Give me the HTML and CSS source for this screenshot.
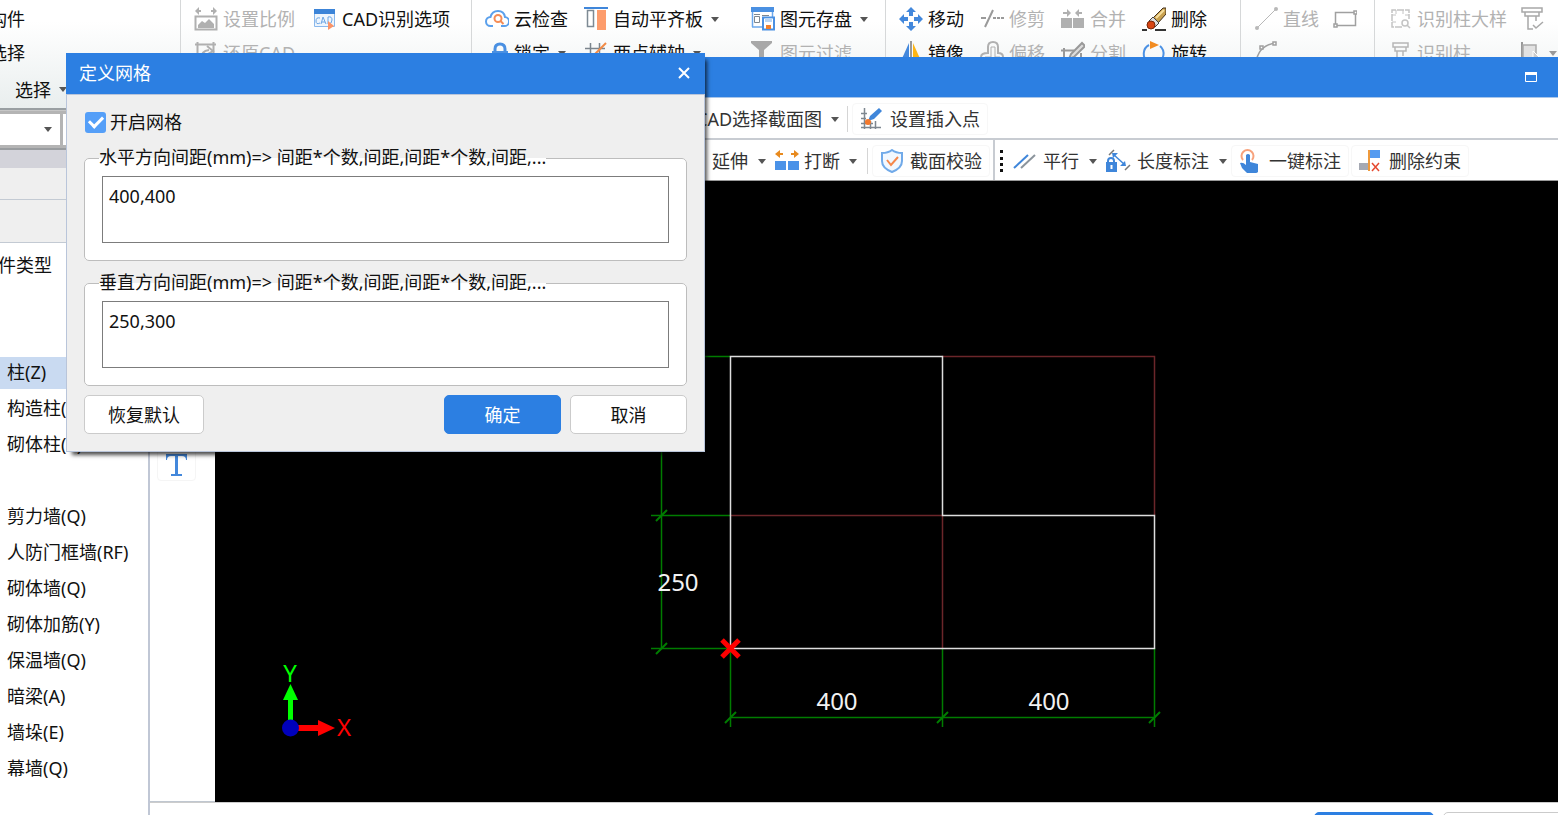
FILE: index.html
```html
<!DOCTYPE html>
<html lang="zh-CN">
<head>
<meta charset="utf-8">
<title>定义网格</title>
<link rel="stylesheet" href="styles.css">
</head>
<body>
<div class="app">
  <header class="ribbon">
    <div class="group group-select">
      <button class="tool">构件</button>
      <button class="tool">选择</button>
      <button class="tool tool-select">选择<span class="caret"></span></button>
    </div>
    <div class="group group-cad">
      <button class="tool" disabled>
        <svg class="icon" viewBox="0 0 24 24" fill="none" stroke="#b0b0b0"><path d="M2 4h5M17 4h5" stroke-width="2"/><path d="M1 4l4-4v8zM23 4l-4-4v8z" fill="#b0b0b0" stroke="none"/><rect x="1.500" y="9.500" width="21" height="13" stroke-width="2"/><path d="M4 21v-3l4-4 3 2 4-4 5 5v4z" fill="#b0b0b0" stroke="none"/></svg>
        设置比例</button>
      <button class="tool">
        <svg class="icon" viewBox="0 0 24 24"><path d="M1 2h21v6H1z" fill="#3c84d8"/><path d="M1.500 7v12.500h20V7" fill="#eef5fd" stroke="#8ab8ec"/><path d="M7 11q-4-1-4 3t4 2M8 17l2-7 3 7M9 15h3M15 10v7q4 0 4-4t-4-3" fill="none" stroke="#6ba5e4"/><path d="M15 14l6 5-6 4z" fill="#fb9468"/></svg>
        CAD识别选项</button>
      <button class="tool" disabled>
        <svg class="icon" viewBox="0 0 24 24" fill="none" stroke="#b0b0b0"><path d="M1 3.500h21M3.500 1v21M19.500 1v21M1 21h21" stroke-width="2"/><path d="M7 18q0-8 8-9M13 5l6 5-7 4" stroke-width="2"/></svg>
        还原CAD</button>
    </div>
    <div class="group group-check">
      <button class="tool">
        <svg class="icon" viewBox="0 0 24 24" fill="none"><path d="M8 19H5.500a4.500 4.500 0 0 1 0-9Q7 4 13 4t7 6a4.500 4.500 0 0 1-1 9h-3" stroke="#5ba0ec" stroke-width="2"/><circle cx="13" cy="11.500" r="3.500" stroke="#f58d57" stroke-width="2"/><path d="M15.500 14l3 3" stroke="#f58d57" stroke-width="2"/></svg>
        云检查</button>
      <button class="tool">
        <svg class="icon" viewBox="0 0 24 24"><path d="M0 1h24" stroke="#3f86da" stroke-width="2"/><rect x="3.500" y="3.500" width="6" height="16" fill="#fff" stroke="#7e8a94" stroke-width="1.500"/><path d="M13 3h9v20h-9z" fill="#fd9c6c"/></svg>
        自动平齐板<span class="caret"></span></button>
      <button class="tool">
        <svg class="icon" viewBox="0 0 24 24" fill="none"><path d="M1.500 20V1.500h20V10M1 20h10" stroke="#6ba8ec" stroke-width="1.500"/><path d="M0 0h23v5H0z" fill="#4a90e2"/><path d="M3.500 9.500h5v6h-5zM3 7.500h6M11 8.500h7" stroke="#7d8790"/><path d="M12 10.500h11v12H12z" fill="#fff" stroke="#4a90e2" stroke-width="2"/><path d="M14 11h7v4h-7z" fill="#b9d6f6"/><path d="M15 18h5v4h-5z" fill="#f07f2e"/></svg>
        图元存盘<span class="caret"></span></button>
      <button class="tool">
        <svg class="icon" viewBox="0 0 24 24"><path d="M10 12V8q0-5 5-5t5 5v4" fill="none" stroke="#4a90e2" stroke-width="3"/><rect x="7" y="10" width="16" height="13" fill="#4a90e2"/></svg>
        锁定<span class="caret"></span></button>
      <button class="tool">
        <svg class="icon" viewBox="0 0 24 24" fill="none"><path d="M1 7.500h20M6.500 2v20M15.500 2v20M1 17.500h21" stroke="#7b858d" stroke-width="1.500"/><path d="M6 18L22 2" stroke="#f28a45" stroke-width="2"/></svg>
        两点辅轴<span class="caret"></span></button>
      <button class="tool" disabled>
        <svg class="icon" viewBox="0 0 24 24"><path d="M0 0h21v2l-8 7v13H8V9L0 2z" fill="#a8a8a8"/></svg>
        图元过滤</button>
    </div>
    <div class="group group-modify">
      <button class="tool">
        <svg class="icon" viewBox="0 0 24 24"><path d="M12 0l5 5h-3v4h-4V5H7zM12 24l-5-5h3v-4h4v4h3zM0 12l5-5v3h4v4H5v3zM24 12l-5 5v-3h-4v-4h4V7z" fill="#4388dc"/></svg>
        移动</button>
      <button class="tool" disabled>
        <svg class="icon" viewBox="0 0 24 24" fill="none" stroke="#9a9a9a" stroke-width="2"><path d="M1 11h5M5 20L13 3"/><path d="M13 11h11" stroke-dasharray="3 1"/></svg>
        修剪</button>
      <button class="tool" disabled>
        <svg class="icon" viewBox="0 0 24 24" fill="#b0b0b0"><path d="M0 11h11v10H0zM12 11h11v10H12zM2 5h4V2l4 4-4 4V7H2zM21 5h-3V2l-4 4 4 4V7h3z"/></svg>
        合并</button>
      <button class="tool">
        <svg class="icon" viewBox="0 0 24 24"><path d="M0 23h5M13 23h11" stroke="#333" stroke-width="2"/><path d="M11 11L21 1h3v6l-8 9z" fill="#c8a04e" stroke="#43301c"/><path d="M14 11l8-8" stroke="#f6df9e" stroke-width="2"/><path d="M7 14l4-4 6 6-4 4z" fill="#ddd" stroke="#444"/><circle cx="9" cy="18" r="4" fill="#d74412" stroke="#762708"/></svg>
        删除</button>
      <button class="tool">
        <svg class="icon" viewBox="0 0 24 24"><path d="M10 2v20H1z" fill="#4388dc"/><path d="M12 0v24" stroke="#999" stroke-width="2"/><path d="M14 2v20h9z" fill="#fdb515"/></svg>
        镜像</button>
      <button class="tool" disabled>
        <svg class="icon" viewBox="0 0 24 24" fill="none" stroke="#b0b0b0" stroke-width="2"><path d="M1 22v-6q0-4 7-4V6q0-5 5-5t5 5v6q5 0 5 4v6z"/><path d="M5 20v-4h6V6h4v10h5v4" stroke-width="1"/></svg>
        偏移</button>
      <button class="tool" disabled>
        <svg class="icon" viewBox="0 0 24 24" fill="none" stroke="#999"><path d="M0 9.500h13M3 7v15M0 20.500h22M20 12v10" stroke-width="2"/><path d="M8 18l2-5L21 2l3 3-11 11z" fill="#ddd" stroke-width="2"/></svg>
        分割</button>
      <button class="tool">
        <svg class="icon" viewBox="0 0 24 24" fill="none"><path d="M7 4a10 10 0 0 0-1 17M18 5a10 10 0 0 1-3 17" stroke="#4b91e4" stroke-width="2"/><path d="M8 0l9 4-9 4z" fill="#f28b20"/></svg>
        旋转</button>
    </div>
    <div class="group group-draw">
      <button class="tool" disabled>
        <svg class="icon" viewBox="0 0 24 24"><path d="M3 21L22 2" stroke="#b8b8b8"/><circle cx="3" cy="21" r="2" fill="#b8b8b8"/><circle cx="22" cy="2" r="2" fill="#b8b8b8"/></svg>
        直线</button>
      <button class="tool" disabled aria-label="矩形">
        <svg class="icon" viewBox="0 0 24 24" fill="#fff" stroke="#a0a0a0" stroke-width="1.500"><path d="M2.500 5.500h20v13h-20z"/><path d="M1 17h3v3H1zM21 4h3v3h-3z"/></svg></button>
      <button class="tool" disabled aria-label="圆弧">
        <svg class="icon" viewBox="0 0 24 24" fill="none" stroke="#a0a0a0" stroke-width="1.500"><path d="M2 22Q4 4 22 2"/><path d="M6 5h3v3H6zM19 1h3v3h-3z" fill="#fff"/></svg></button>
    </div>
    <div class="group group-identify">
      <button class="tool" disabled>
        <svg class="icon" viewBox="0 0 24 24" fill="none" stroke="#c4c4c4" stroke-width="1.500"><path d="M14 20H4V3h17v9" stroke-dasharray="7 1"/><path d="M8 3v4M15 3v4M4 8h4M4 15h4M17 8h4" stroke-width="1"/><circle cx="17" cy="16" r="3"/><path d="M19 18l3 3"/></svg>
        识别柱大样</button>
      <button class="tool" disabled aria-label="校核柱">
        <svg class="icon" viewBox="0 0 24 24" fill="none" stroke="#a8a8a8" stroke-width="1.500"><path d="M2 1h20v4H2zM5 5v4h14V5M8 9v13h5M16 9v5M13 18l3 3 7-6"/></svg></button>
      <button class="tool" disabled>
        <svg class="icon" viewBox="0 0 24 24" fill="none" stroke="#b6b6b6" stroke-width="1.500"><path d="M5 2h15v4H5zM7 6v4h11V6M9 10v12h6M15 10v5"/></svg>
        识别柱</button>
      <button class="tool" disabled aria-label="拾取">
        <svg class="icon" viewBox="0 0 24 24"><path d="M2 1v23" stroke="#999" stroke-width="2"/><path d="M3 4h13v14H3z" fill="#e2e2e2" stroke="#aaa" stroke-width="1.500"/><path d="M13 10l9 9-5 1-4 4z" fill="#ccc" stroke="#fff"/></svg>
        <span class="caret"></span></button>
    </div>
  </header>

  <aside class="dock">
    <div class="combos">
      <button class="combo" aria-label="楼层"><span class="caret"></span></button>
      <button class="combo" aria-label="构件类别"></button>
    </div>
    <div class="dock-band"></div>
    <div class="dock-bar"></div>
    <div class="dock-bar dock-bar-tall"></div>
    <h2 class="dock-title">件类型</h2>
    <ul class="types">
      <li class="type"><a class="type-link type-active" href="#">柱(Z)</a></li>
      <li class="type"><a class="type-link" href="#">构造柱(Z)</a></li>
      <li class="type"><a class="type-link" href="#">砌体柱(Z)</a></li>
      <li class="type"></li>
      <li class="type"><a class="type-link" href="#">剪力墙(Q)</a></li>
      <li class="type"><a class="type-link" href="#">人防门框墙(RF)</a></li>
      <li class="type"><a class="type-link" href="#">砌体墙(Q)</a></li>
      <li class="type"><a class="type-link" href="#">砌体加筋(Y)</a></li>
      <li class="type"><a class="type-link" href="#">保温墙(Q)</a></li>
      <li class="type"><a class="type-link" href="#">暗梁(A)</a></li>
      <li class="type"><a class="type-link" href="#">墙垛(E)</a></li>
      <li class="type"><a class="type-link" href="#">幕墙(Q)</a></li>
    </ul>
  </aside>
</div>

<section class="editor">
  <div class="editor-title">
    <button class="maximize" aria-label="最大化"><svg class="glyph" viewBox="0 0 14 14"><path d="M1.500 2.500h11v9h-11z" fill="none" stroke="#fff"/><path d="M1 2h12v3H1z" fill="#fff"/></svg></button>
  </div>
  <div class="bar bar-source">
    <button class="bar-tool">CAD选择截面图<span class="caret"></span></button>
    <span class="rule"></span>
    <button class="bar-tool framed">
      <svg class="icon" viewBox="0 0 24 24" fill="none"><path d="M4.500 1v21M1 16.500h12M1 6.500h6M1 11.500h5M10.500 14v8M15.500 14v8M1 20.500h20" stroke="#7e8790" stroke-width="1.500"/><path d="M8 14l2-5 9-8 3 3-8 8z" fill="#3f86da"/><circle cx="8" cy="15" r="3" fill="#f4792c"/></svg>
      设置插入点</button>
  </div>
  <div class="bar bar-edit">
    <button class="bar-tool">延伸<span class="caret"></span></button>
    <button class="bar-tool tool-break">
      <svg class="icon" viewBox="0 0 24 24"><path d="M0 12h11v9H0zM13 12h11v9H13z" fill="#4a92e8"/><path d="M0 5l5-4v3h3v2H5v3zM24 5l-5-4v3h-3v2h3v3z" fill="#e88a1e"/></svg>
      打断<span class="caret"></span></button>
    <span class="rule rule-check"></span>
    <button class="bar-tool framed">
      <svg class="icon" viewBox="0 0 24 24" fill="none"><path d="M12 1q4 3 10 3v8q0 7-10 11Q2 19 2 12V4q6 0 10-3z" fill="#f2f8ff" stroke="#71aae9" stroke-width="2"/><path d="M7 11l4 5 7-8" stroke="#f5874b" stroke-width="2"/></svg>
      截面校验</button>
    <span class="divider"></span>
    <span class="grip"></span>
    <button class="bar-tool">
      <svg class="icon" viewBox="0 0 24 24" fill="none" stroke-width="2"><path d="M1 19L15 6" stroke="#3f86da"/><path d="M8 19L22 6" stroke="#8b949c"/></svg>
      平行<span class="caret"></span></button>
    <button class="bar-tool tool-length">
      <svg class="icon icon-wide" viewBox="0 0 26 24" fill="none"><path d="M4 6l5-5M20 21l5-5" stroke="#777" stroke-width="1.500"/><path d="M9 6l10 9" stroke="#3f86da" stroke-width="1.500"/><path d="M7 4h6l-5 5zM21 17h-6l5-5z" fill="#3f86da"/><path d="M3 14v-2q0-3 3-3t3 3v2" stroke="#3f86da" stroke-width="2"/><path d="M1 13h11v10H1z" fill="#3f86da"/><path d="M6.500 16v4" stroke="#fff" stroke-width="2"/></svg>
      长度标注<span class="caret"></span></button>
    <button class="bar-tool framed">
      <svg class="icon" viewBox="0 0 24 24" fill="none"><path d="M4 11a6 6 0 1 1 9 0" stroke="#f7a27c" stroke-width="2"/><path d="M7 6q2-2 4 0v7l8 2v8q-1 1-2 1H8l-5-5-2-5q3-1 6 2z" fill="#3f86da"/></svg>
      一键标注</button>
    <button class="bar-tool framed">
      <svg class="icon" viewBox="0 0 24 24" fill="none"><path d="M0 14h10v7H0z" fill="#a5a9b3"/><path d="M10 1h11v8H10z" fill="#559bf0"/><path d="M10 1v21" stroke="#ef9a3c" stroke-width="2"/><path d="M13 14l7 8M20 14l-7 8" stroke="#e5492f" stroke-width="1.500"/></svg>
      删除约束</button>
  </div>
  <div class="workspace">
    <div class="side-tools">
      <button class="text-tool" aria-label="文字"><svg class="icon" viewBox="0 0 24 24"><path d="M1 1h21v6h-1q0-4-4-4h-4v18h4v2H6v-2h4V3H6Q2 3 2 7H1z" fill="#4388dc"/></svg></button>
    </div>
    <div class="canvas">
      <svg class="drawing" role="img" aria-label="截面网格">
        <g class="dim-lines">
          <path d="M446.500 175V467M436 334.500H515M436 467.500H515M446 175.500H515"/>
          <path d="M515.500 467V546M727.500 467V546M939.500 467V546M515 536.500H939"/>
          <path class="tick" d="M441 340l11-11M441 473l11-11M510 542l11-11M722 542l11-11M934 542l11-11"/>
        </g>
        <path class="grid-line" d="M727 175.500H939.500V334M515 334.500H727.500V467"/>
        <path class="outline" d="M515.500 175.500H727.500V334.500H939.500V467.500H515.500z"/>
        <path class="origin-mark" d="M507 459l17 17M524 459l-17 17"/>
        <text class="dim-text" x="463" y="410">250</text>
        <text class="dim-text" x="622" y="529">400</text>
        <text class="dim-text" x="834" y="529">400</text>
        <path d="M73 545v-26h-5l7.500-16 7.500 16h-5v26z" fill="#0f0"/>
        <path d="M78 544h25v-5l17 8-17 8v-5H78z" fill="#f00"/>
        <circle cx="75.500" cy="547" r="8.500" fill="#00b"/>
        <text class="axis-text" x="75" y="501" fill="#0f0">Y</text>
        <text class="axis-text" x="129" y="555" fill="#f00">X</text>
      </svg>
    </div>
  </div>
  <footer class="editor-footer">
    <button class="btn btn-primary" aria-label="确定"></button>
    <button class="btn btn-last" aria-label="取消"></button>
  </footer>
</section>

<form class="dialog" role="dialog" aria-labelledby="dialog-title">
  <div class="dialog-title">
    <h1 class="dialog-heading" id="dialog-title">定义网格</h1>
    <button class="close" type="button" aria-label="关闭"><svg class="glyph" viewBox="0 0 14 14"><path d="M2 2l10 10M12 2L2 12" stroke="#fff" stroke-width="2"/></svg></button>
  </div>
  <div class="dialog-body">
    <label class="enable"><input class="tickbox" type="checkbox" checked>开启网格</label>
    <fieldset class="spacing">
      <legend class="spacing-label" id="h-label">水平方向间距(mm)=&gt; 间距*个数,间距,间距*个数,间距,...</legend>
      <textarea class="spacing-input" aria-labelledby="h-label">400,400</textarea>
    </fieldset>
    <fieldset class="spacing">
      <legend class="spacing-label" id="v-label">垂直方向间距(mm)=&gt; 间距*个数,间距,间距*个数,间距,...</legend>
      <textarea class="spacing-input" aria-labelledby="v-label">250,300</textarea>
    </fieldset>
    <div class="actions">
      <button class="btn btn-reset" type="button">恢复默认</button>
      <button class="btn btn-primary" type="button">确定</button>
      <button class="btn" type="button">取消</button>
    </div>
  </div>
</form>
</body>
</html>
```
FILE: styles.css
```css
* { box-sizing: border-box; }

body {
  margin: 0;
  height: 100vh;
  overflow: hidden;
  background: #fff;
  color: #111;
  font: 18px/24px "Noto Sans", "Noto Sans CJK SC", sans-serif;
}

button, textarea {
  font: inherit;
  color: inherit;
}

button {
  border: 0;
  padding: 0;
  background: none;
  white-space: nowrap;
}

.icon { width: 24px; height: 24px; flex: none; }
.icon-wide { width: 26px; }
.glyph { width: 14px; height: 14px; display: block; }

.caret {
  border: 4px solid transparent;
  border-top: 5px solid #555;
  border-bottom: 0;
  margin-left: 3px;
}

/* main window */
.app {
  display: flex;
  flex-direction: column;
  height: 100%;
}

.ribbon {
  display: flex;
  flex: none;
  height: 110px;
  border-bottom: 2px solid #999fa2;
  background: linear-gradient(#fff 20%, #e9eeee);
}

.group {
  display: grid;
  flex: none;
  grid-auto-rows: 34px;
  align-content: start;
  padding: 2px 0 0 13px;
  border-left: 1px solid #d6d8d9;
}
.group-select { width: 180px; padding-left: 0; border-left: 0; }
.group-select .tool { margin-left: -11px; }
.group-select .tool-select { margin: 5px 0 0 15px; }
.group-cad { width: 291px; grid-template-columns: 119px 1fr; }
.group-check { width: 414px; grid-template-columns: 99px 167px 1fr; }
.group-modify { width: 355px; grid-template-columns: repeat(4, 81px); }
.group-draw { width: 134px; grid-template-columns: 79px 1fr; }
.group-identify { flex: 1; grid-template-columns: 132px 1fr; }

.tool {
  display: flex;
  align-items: center;
  gap: 5px;
}
.tool:disabled { color: #b2b2b2; }
.tool:disabled .caret { border-top-color: #999; margin-left: 0; }

.dock {
  flex: 1;
  width: 150px;
  border-right: 2px solid #c0c7d5;
  background: #fff;
}

.combos {
  display: flex;
  gap: 3px;
  height: 40px;
  padding: 3px 0;
  background: #b4b4b4;
  border-top: 1px solid #c6c6c6;
  border-bottom: 2px solid #999c9f;
}
.combo {
  flex: 1;
  display: flex;
  align-items: center;
  justify-content: flex-end;
  padding-right: 8px;
  background: #fff;
}
.combo:first-child { flex: 0 0 60px; }

.dock-band { height: 18px; background: #d3d3da; }
.dock-bar {
  height: 32px;
  background: #efefef;
  border-bottom: 1px solid #c3cad3;
}
.dock-bar-tall { height: 43px; }

.dock-title {
  margin: 10px 0 0 -2px;
  font-size: 18px;
  font-weight: 400;
}

.types { list-style: none; margin: 78px 0 0; padding: 0; }
.type { height: 36px; padding: 2px 0; }
.type-link {
  display: block;
  padding: 3px 0 5px 7px;
  color: inherit;
  text-decoration: none;
}
.type-active { background: #c9daf1; }

/* section editor window */
.editor {
  position: absolute;
  inset: 57px 0 0 150px;
  display: flex;
  flex-direction: column;
  background: #fff;
  color: #333;
}

.editor-title {
  display: flex;
  align-items: center;
  justify-content: flex-end;
  height: 41px;
  padding-right: 20px;
  background: #2c7fe2;
  border-bottom: 1px solid #a9c6ea;
}

.bar {
  display: flex;
  align-items: center;
  height: 42px;
  padding-top: 2px;
  border-bottom: 2px solid #c8ccd2;
}
.bar-source { padding-left: 546px; }
.bar-edit { height: 41px; padding-left: 562px; border-bottom: 1px solid #999; }
.bar-edit .caret { margin-left: 4px; }

.bar-tool {
  display: flex;
  align-items: center;
  gap: 6px;
  height: 32px;
}
.tool-break { margin-left: 9px; gap: 5px; }
.tool-length { margin: 0 4px 0 8px; }

.framed {
  padding: 0 7px;
  border: 1px solid #f7f7f7;
  border-radius: 4px;
}
.framed + .framed { margin-left: 2px; }

.rule {
  width: 1px;
  height: 26px;
  margin: 0 4px 0 8px;
  background: #d5d5d5;
}
.rule-check { margin-left: 10px; }
.divider {
  align-self: stretch;
  width: 2px;
  margin: -2px 0 0 3px;
  background: #c8ccd2;
}
.grip {
  height: 22px;
  margin: 0 10px 0 5px;
  border-left: 3px dotted #111;
}

.workspace { flex: 1; display: flex; min-height: 0; }
.side-tools {
  width: 65px;
  padding: 267px 0 0 7px;
  border-bottom: 1px solid #c0c7d0;
}
.text-tool {
  display: flex;
  align-items: center;
  justify-content: center;
  width: 39px;
  height: 33px;
  border: 1px solid #f5f5f5;
  border-radius: 4px;
}

.canvas { flex: 1; background: #000; }
.drawing { display: block; width: 100%; height: 100%; }
.dim-lines { fill: none; stroke: #007c00; stroke-width: 1.5; }
.tick { stroke-width: 2; }
.grid-line { fill: none; stroke: #6b262a; stroke-width: 1.5; }
.outline { fill: none; stroke: #ddd; stroke-width: 1.5; }
.origin-mark { fill: none; stroke: #f00; stroke-width: 5; }
.dim-text { fill: #f2f2f2; font-size: 24px; text-anchor: middle; }
.axis-text { font-size: 24px; text-anchor: middle; }

.editor-footer {
  display: flex;
  justify-content: flex-end;
  gap: 9px;
  height: 13px;
  padding-top: 9px;
  border-top: 1px solid #ccc;
  overflow: hidden;
}
.editor-footer .btn { width: 120px; flex: none; }
.editor-footer .btn-last { margin-right: -5px; }

/* grid dialog */
.dialog {
  position: absolute;
  left: 66px;
  top: 53px;
  width: 639px;
  box-shadow: 4px 5px 4px -2px rgba(0, 0, 0, 0.7);
}

.dialog-title {
  display: flex;
  align-items: center;
  justify-content: space-between;
  height: 41px;
  padding: 0 14px 2px 13px;
  background: #2c7fe2;
  color: #fff;
}
.dialog-heading { margin: 0; font-size: 18px; font-weight: 400; }

.dialog-body {
  padding: 15px 17px 17px;
  background: #efefef;
  border: 1px solid #b9c5da;
}

.enable {
  display: flex;
  align-items: center;
  gap: 4px;
  width: max-content;
}

.tickbox {
  appearance: none;
  display: grid;
  place-items: center;
  width: 21px;
  height: 21px;
  margin: 0 0 0 1px;
  border-radius: 3px;
  background: #559ff8;
}
.tickbox:checked::before {
  content: "";
  width: 11px;
  height: 6px;
  margin-bottom: 4px;
  border: solid #fff;
  border-width: 0 0 3px 3px;
  transform: rotate(-45deg);
}

.spacing {
  margin: 12px 0 0;
  padding: 6px 17px 17px;
  min-width: 0;
  background: #fff;
  border: 1px solid #bdbdbd;
  border-radius: 5px;
}
.spacing + .spacing { margin-top: 10px; }
.spacing-label {
  margin-left: -3px;
  padding: 0 0 2px;
  line-height: 22px;
}
.spacing-input {
  display: block;
  width: 100%;
  height: 67px;
  padding: 7px 6px;
  border: 1px solid #7c7c7c;
  border-radius: 0;
  background: #fff;
  resize: none;
  overflow: hidden;
}

.actions { display: flex; gap: 9px; margin-top: 9px; }

.btn {
  width: 117px;
  height: 39px;
  border: 1px solid #cbcbcb;
  border-radius: 5px;
  background: #fff;
}
.btn-reset { width: 120px; margin-right: auto; }
.btn-primary { background: #2c7fe2; border-color: #2c7fe2; color: #fff; }
```
